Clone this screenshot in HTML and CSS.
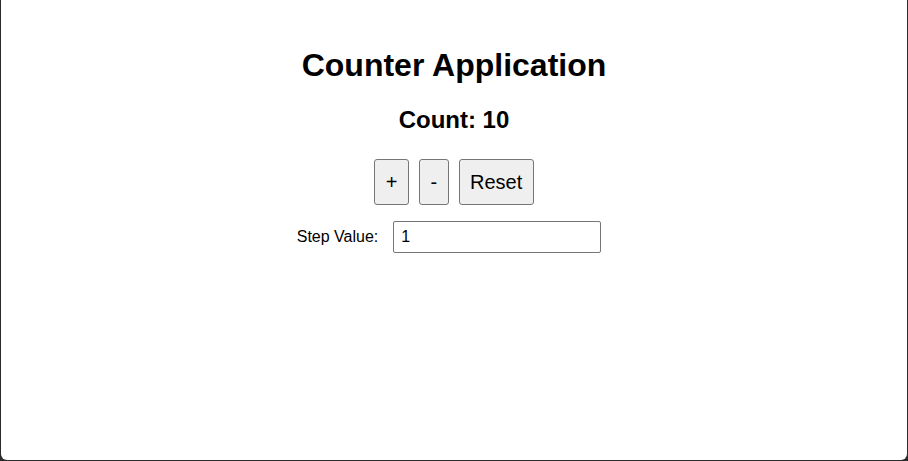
FILE: index.html
```html
<!DOCTYPE html>
<html lang="en">
<head>
<meta charset="utf-8">
<title>Counter Application</title>
<link rel="stylesheet" href="styles.css">
</head>
<body>
<div class="frame">
  <div class="app">
    <h1 class="title">Counter Application</h1>
    <h2 class="count">Count: 10</h2>
    <div class="buttons"><button class="btn">+</button><button class="btn">-</button><button class="btn">Reset</button></div>
    <div class="step-row">
      <label class="step-label" for="step">Step Value:</label>
      <input class="step-input" id="step" type="number" value="1">
    </div>
  </div>
</div>
</body>
</html>
```
FILE: styles.css
```css
html {
  background: #2b2b2b;
  height: 100%;
}
body {
  margin: 0;
  height: 100%;
  font-family: "Liberation Sans", Arial, sans-serif;
}
.frame {
  margin: 0 1px;
  height: 460px;
  background: #ffffff;
  border-radius: 0 0 6px 6px;
  padding-top: 6px;
  box-sizing: border-box;
  overflow: hidden;
}
.app {
  padding: 20px;
  text-align: center;
  color: #000;
}
.title {
  font-size: 32px;
  font-weight: bold;
  margin: 21.44px 0;
}
.count {
  font-size: 24px;
  font-weight: bold;
  margin: 19.92px 0;
}
.buttons {
  display: flex;
  justify-content: center;
}
.btn {
  font-family: "Liberation Sans", Arial, sans-serif;
  font-size: 20px;
  padding: 10px 10.5px;
  margin: 5px;
  background: #efefef;
  border: 1px solid #767676;
  border-radius: 3px;
  color: #000;
  line-height: 24px;
}
.step-row {
  display: flex;
  justify-content: center;
  align-items: center;
  margin-top: 11px;
}
.step-label {
  font-size: 16px;
  margin-right: 15px;
}
.step-input {
  box-sizing: border-box;
  width: 208px;
  height: 32px;
  margin-right: 10px;
  padding: 0 7px;
  font-family: "Liberation Sans", Arial, sans-serif;
  font-size: 16px;
  border: 1px solid #767676;
  border-radius: 2px;
  color: #000;
  -moz-appearance: textfield;
}
.step-input::-webkit-inner-spin-button,
.step-input::-webkit-outer-spin-button {
  -webkit-appearance: none;
  margin: 0;
}
```
